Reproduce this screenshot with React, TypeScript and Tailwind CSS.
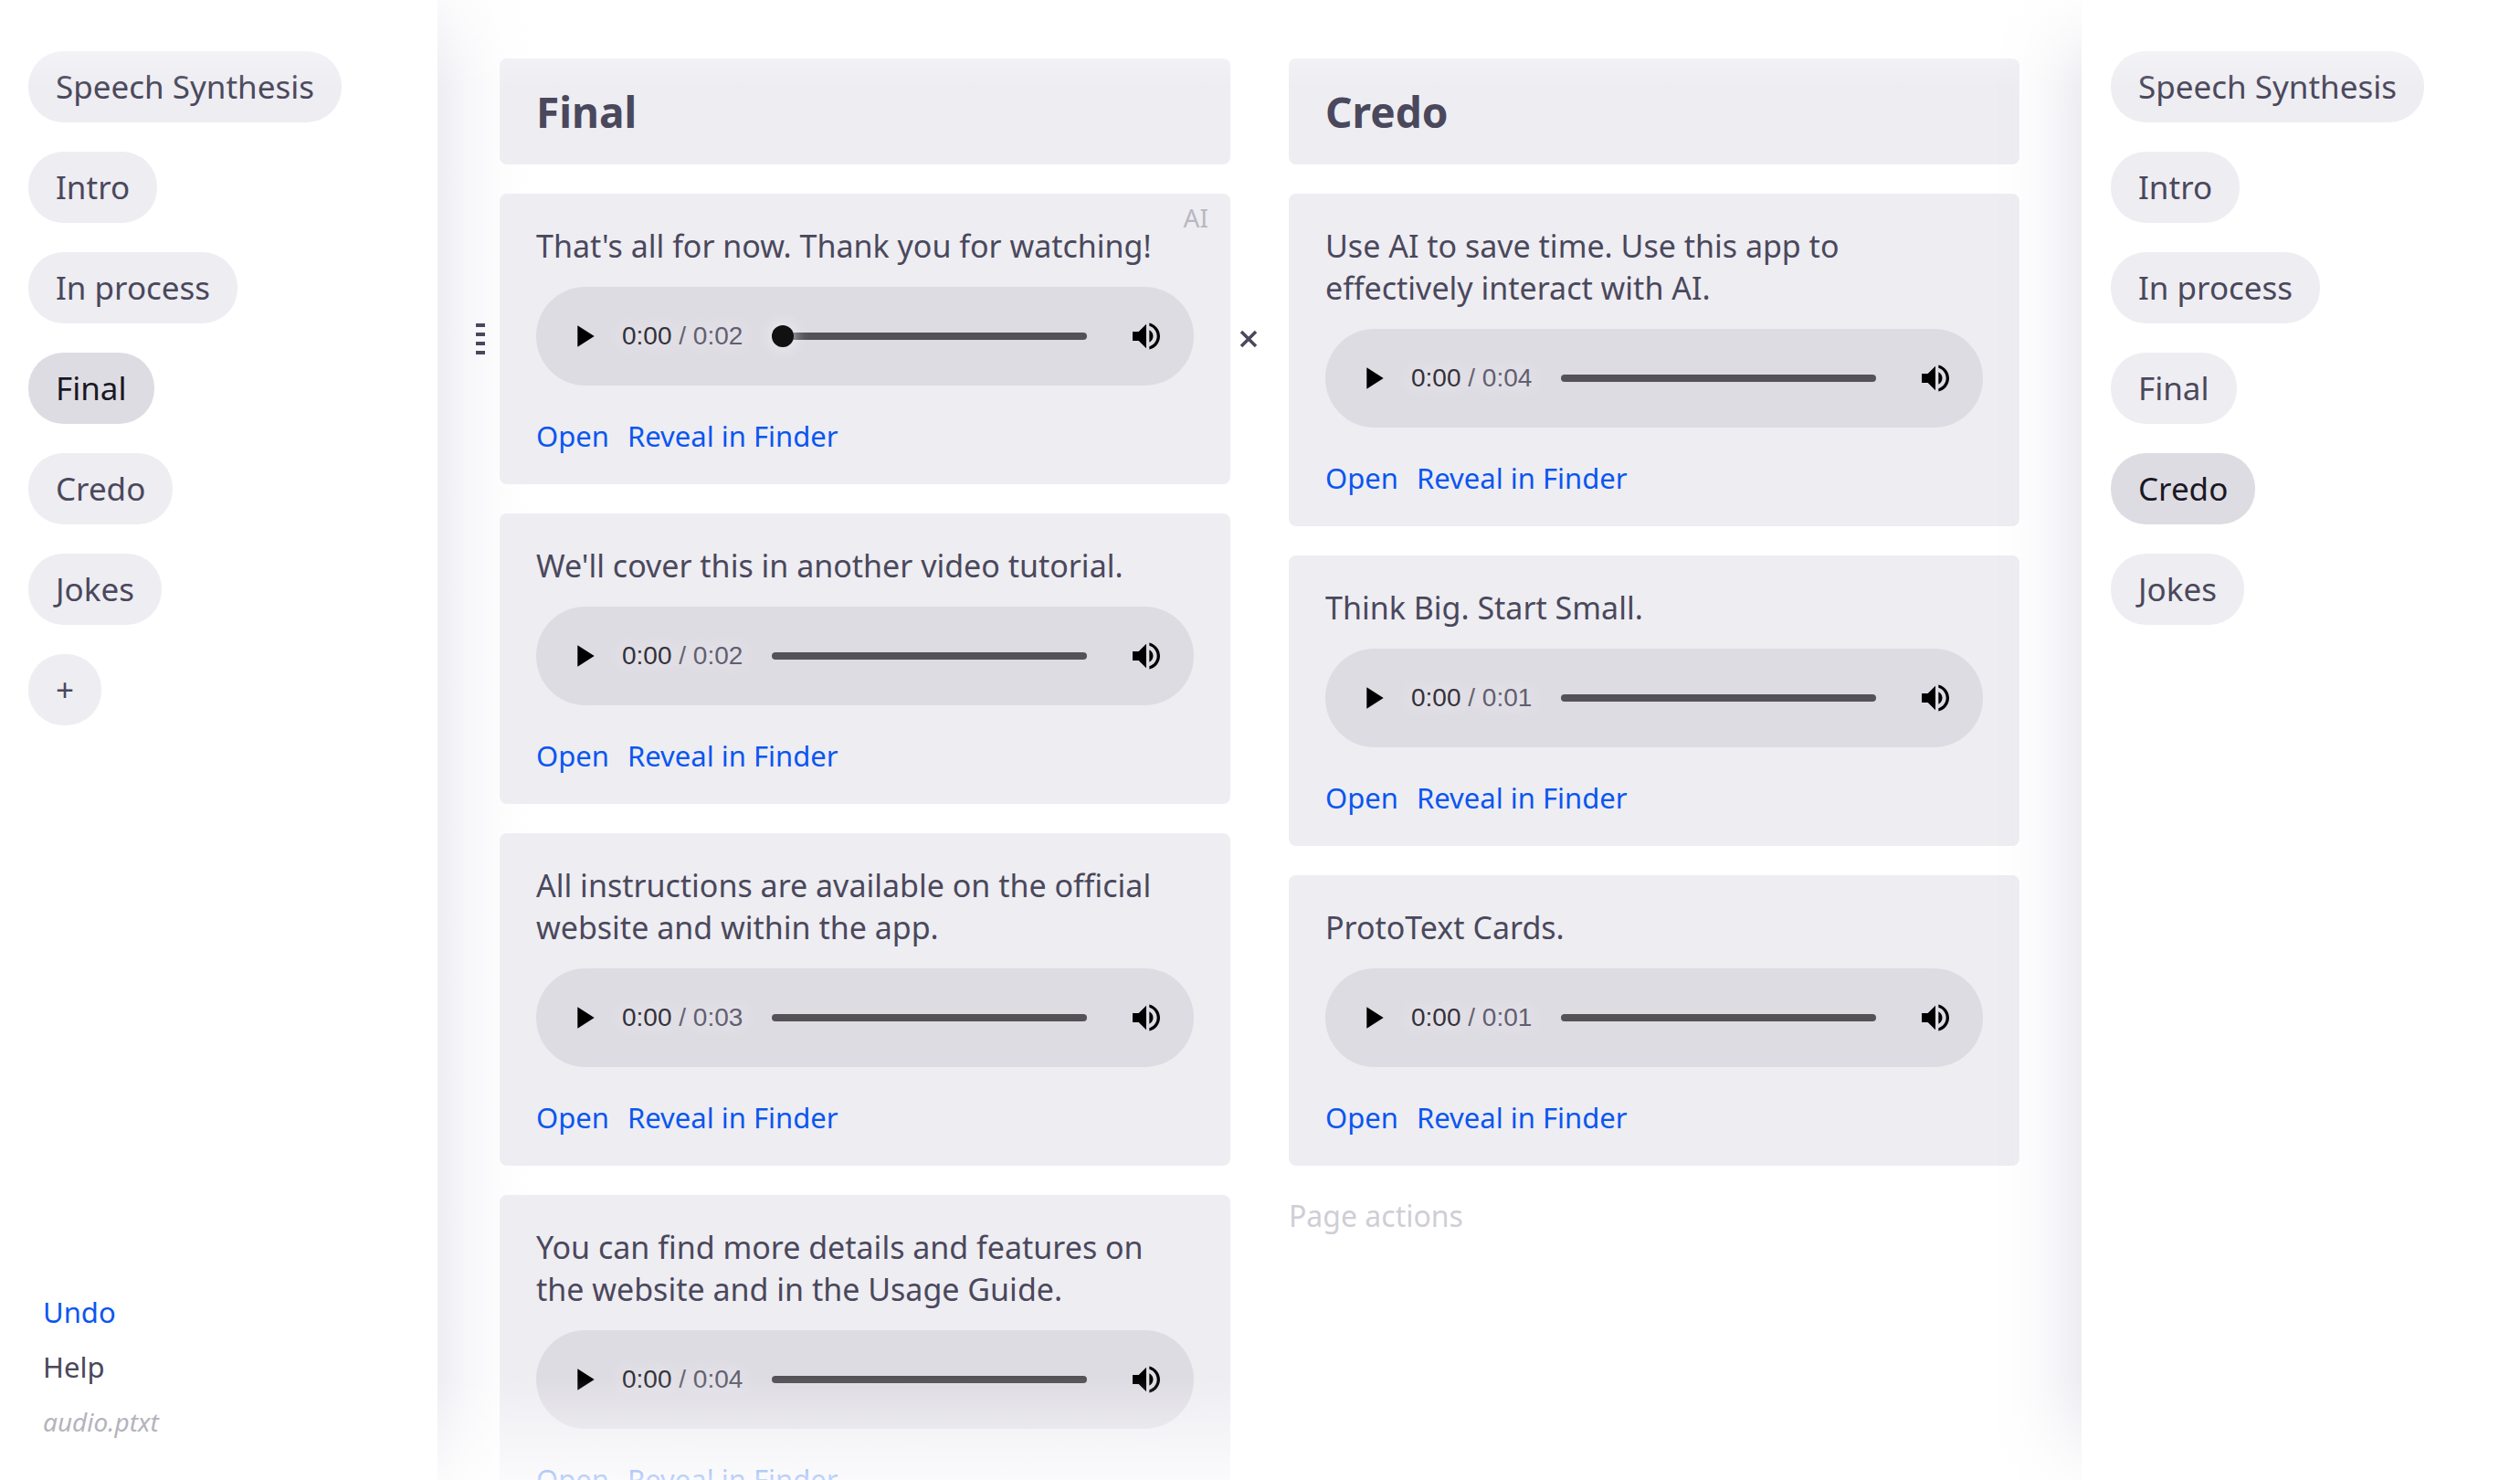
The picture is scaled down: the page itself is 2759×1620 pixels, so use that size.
import React from "react";

const pages = ["Speech Synthesis", "Intro", "In process", "Final", "Credo", "Jokes"];

type Clip = { text: string; length: string; selected?: boolean };

const finalClips: Clip[] = [
  { text: "That's all for now. Thank you for watching!", length: "0:02", selected: true },
  { text: "We'll cover this in another video tutorial.", length: "0:02" },
  { text: "All instructions are available on the official website and within the app.", length: "0:03" },
  { text: "You can find more details and features on the website and in the Usage Guide.", length: "0:04" },
];

const credoClips: Clip[] = [
  { text: "Use AI to save time. Use this app to effectively interact with AI.", length: "0:04" },
  { text: "Think Big. Start Small.", length: "0:01" },
  { text: "ProtoText Cards.", length: "0:01" },
];

function Pill({ label, active, name }: { label: string; active?: boolean; name?: string }) {
  return (
    <button
      type="button"
      aria-label={name}
      aria-current={active ? "page" : undefined}
      className={`h-[78px] rounded-[38px] px-[30px] text-[35px] leading-[46px] ${
        active ? "bg-[#dedce3] text-[#191824]" : "bg-[#eeedf2] text-[#4a485c]"
      }`}
    >
      {label}
    </button>
  );
}

function PageNav({ active, label, canAdd }: { active: string; label: string; canAdd?: boolean }) {
  return (
    <nav aria-label={label} className="flex flex-col items-start gap-8">
      {pages.map((p) => (
        <Pill key={p} label={p} active={p === active} />
      ))}
      {canAdd && <Pill label="+" name="Add page" />}
    </nav>
  );
}

function Player({ length, thumb }: { length: string; thumb?: boolean }) {
  return (
    <div className="mt-[22px] flex h-[108px] items-center rounded-full bg-[#dedce3] px-8">
      <button type="button" aria-label="Play" className="shrink-0 text-black">
        <svg viewBox="0 0 24 24" className="size-10" fill="currentColor">
          <path d="M8 5v14l11-7z" />
        </svg>
      </button>
      <div className="ml-[22px] w-[164px] shrink-0 whitespace-nowrap font-['Liberation_Sans',sans-serif] text-[28px] leading-8 text-[#625f70] [text-shadow:0_0_20px_#f4f2f8]">
        <span className="text-[#333138]">0:00</span> / {length}
      </div>
      <input
        type="range"
        aria-label="Position"
        min={0}
        max={100}
        defaultValue={0}
        className={`h-6 min-w-0 flex-1 appearance-none bg-transparent [&::-webkit-slider-runnable-track]:h-2 [&::-webkit-slider-runnable-track]:rounded-full [&::-webkit-slider-runnable-track]:bg-[#545257] [&::-webkit-slider-thumb]:-mt-2 [&::-webkit-slider-thumb]:size-6 [&::-webkit-slider-thumb]:appearance-none [&::-webkit-slider-thumb]:rounded-full [&::-webkit-slider-thumb]:bg-[#111111] ${
          thumb
            ? "[&::-webkit-slider-thumb]:shadow-[0_0_16px_#f4f2f8]"
            : "[&::-webkit-slider-thumb]:opacity-0"
        }`}
      />
      <button type="button" aria-label="Mute" className="ml-[45px] shrink-0 text-black">
        <svg viewBox="0 0 24 24" className="size-10" fill="currentColor">
          <path d="M3 9v6h4l5 5V4L7 9H3zm13.500 3c0-1.770-1.020-3.290-2.500-4.030v8.050c1.480-.73 2.500-2.250 2.500-4.020zM14 3.230v2.060c2.890.86 5 3.540 5 6.710s-2.110 5.850-5 6.710v2.060c4.010-.91 7-4.490 7-8.770s-2.990-7.860-7-8.770z" />
        </svg>
      </button>
    </div>
  );
}

function ClipCard({ clip }: { clip: Clip }) {
  return (
    <article className="relative rounded-lg bg-[#eeedf2] px-10 pt-[34px] pb-8">
      {clip.selected && (
        <>
          <button
            type="button"
            aria-label="Drag card"
            className="absolute top-1/2 right-full mr-4 flex -translate-y-1/2 flex-col gap-1.5"
          >
            <span className="h-1 w-2.5 bg-[#4a485c]" />
            <span className="h-1 w-2.5 bg-[#4a485c]" />
            <span className="h-1 w-2.5 bg-[#4a485c]" />
            <span className="h-1 w-2.5 bg-[#4a485c]" />
          </button>
          <button
            type="button"
            aria-label="Remove card"
            className="absolute top-1/2 left-full ml-2.5 -translate-y-1/2 text-[#4a485c]"
          >
            <svg viewBox="0 0 20 20" className="size-5" fill="none" stroke="currentColor" strokeWidth="3.500">
              <path d="M2 2l16 16M18 2L2 18" />
            </svg>
          </button>
          <span className="absolute top-2.5 right-6 text-[28px] leading-8 text-[#b9b8c1]">AI</span>
        </>
      )}
      <p className="text-[34px] leading-[46px]">{clip.text}</p>
      <Player length={clip.length} thumb={clip.selected} />
      <div className="mt-[34px] flex gap-5 text-[31px] leading-[42px] text-[#0a56f0]">
        <a href="#open">Open</a>
        <a href="#reveal">Reveal in Finder</a>
      </div>
    </article>
  );
}

function Column({ title, clips, children }: { title: string; clips: Clip[]; children?: React.ReactNode }) {
  return (
    <section className="flex min-w-0 flex-1 flex-col gap-8">
      <h2 className="rounded-lg bg-[#eeedf2] px-10 py-[30px] text-[46px] leading-[56px] font-bold">{title}</h2>
      {clips.map((c) => (
        <ClipCard key={c.text} clip={c} />
      ))}
      {children}
    </section>
  );
}

export default function App() {
  return (
    <div className="relative flex h-screen overflow-hidden bg-white font-['Noto_Sans',sans-serif] text-[#4a485c]">
      <aside className="flex w-[479px] shrink-0 flex-col justify-between bg-white px-[31px] pt-14 pb-[42px]">
        <PageNav active="Final" label="Left pages" canAdd />
        <div className="flex flex-col items-start gap-4 pl-4 text-[31px] leading-[44px]">
          <a href="#undo" className="text-[#0a56f0]">Undo</a>
          <a href="#help">Help</a>
          <span className="text-[28px] text-[#b4b3bd] italic">audio.ptxt</span>
        </div>
      </aside>

      <main className="flex min-w-0 flex-1 items-start gap-16 bg-[linear-gradient(to_right,#eeedf2_0,#f7f7fa_32px,#fcfcfd_64px,#fff_100px)] px-[68px] pt-16">
        <Column title="Final" clips={finalClips} />
        <Column title="Credo" clips={credoClips}>
          <button type="button" className="self-start text-[32px] leading-[46px] text-[#cfced5]">Page actions</button>
        </Column>
      </main>

      <aside className="relative w-[480px] shrink-0 bg-white px-8 pt-14 shadow-[0_16px_90px_#dcdae4]">
        <PageNav active="Credo" label="Right pages" />
      </aside>

      <div className="pointer-events-none absolute inset-x-0 top-0 h-24 bg-linear-to-b from-white/70 to-transparent" />
      <div className="pointer-events-none absolute right-[480px] bottom-0 left-[479px] h-28 bg-linear-to-t from-white/75 to-transparent" />
    </div>
  );
}
